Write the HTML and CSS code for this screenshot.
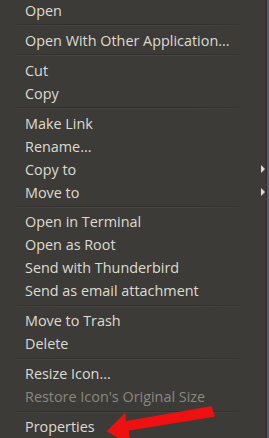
FILE: index.html
```html
<!DOCTYPE html>
<html>
<head>
<meta charset="utf-8">
<link rel="stylesheet" href="styles.css">
</head>
<body>
<div class="screen">
  <div class="menu">
    <div class="item">Open</div>
    <div class="sep"></div>
    <div class="item">Open With Other Application...</div>
    <div class="sep"></div>
    <div class="item">Cut</div>
    <div class="item">Copy</div>
    <div class="sep"></div>
    <div class="item">Make Link</div>
    <div class="item">Rename...</div>
    <div class="item sub">Copy to<span class="tri"></span></div>
    <div class="item sub">Move to<span class="tri"></span></div>
    <div class="sep"></div>
    <div class="item">Open in Terminal</div>
    <div class="item">Open as Root</div>
    <div class="item">Send with Thunderbird</div>
    <div class="item">Send as email attachment</div>
    <div class="sep"></div>
    <div class="item">Move to Trash</div>
    <div class="item">Delete</div>
    <div class="sep"></div>
    <div class="item">Resize Icon...</div>
    <div class="item disabled">Restore Icon's Original Size</div>
    <div class="sep"></div>
    <div class="item">Properties</div>
  </div>
  <div class="desk"></div>
  <svg class="arrow" width="269" height="438" viewBox="0 0 269 438">
    <polygon points="211,407 214,416 128,430 130,444 108,431 125,414 125,422" fill="#ee1111" stroke="#ee1111" stroke-width="1.5" stroke-linejoin="round"/>
  </svg>
</div>
</body>
</html>
```
FILE: styles.css
```css
html, body {
  margin: 0;
  padding: 0;
  background: #3c3b37;
}
.screen {
  position: relative;
  width: 269px;
  height: 438px;
  overflow: hidden;
  display: flex;
}
.menu {
  width: 266px;
  background: #3c3b37;
  border-right: 1px solid #2d2c29;
  display: flex;
  flex-direction: column;
  margin-top: -1px;
  font-family: "Open Sans", "Noto Sans", sans-serif;
  font-size: 14.4px;
  color: #dfdbd2;
}
.desk {
  width: 2px;
  background: #4d6070;
}
.item {
  height: 23px;
  line-height: 23px;
  padding-left: 25px;
  display: flex;
  align-items: center;
  justify-content: space-between;
  white-space: nowrap;
}
.item.disabled {
  color: #8b8880;
}
.sep {
  height: 7px;
  display: flex;
  flex-direction: column;
  justify-content: center;
  padding: 0 25px 0 15px;
}
.sep::before {
  content: "";
  height: 1px;
  background: linear-gradient(to right, rgba(40,39,36,0.3), #2f2e2b 20%, #2f2e2b 80%, rgba(40,39,36,0.2));
}
.sep::after {
  content: "";
  height: 1px;
  background: linear-gradient(to right, rgba(80,79,74,0.2), #46453f 20%, #46453f 80%, rgba(80,79,74,0.1));
}
.tri {
  width: 0;
  height: 0;
  border-top: 4px solid transparent;
  border-bottom: 4px solid transparent;
  border-left: 4px solid #dfdbd2;
  margin-right: 1px;
}
.arrow {
  position: absolute;
  left: 0;
  top: 0;
}
```
